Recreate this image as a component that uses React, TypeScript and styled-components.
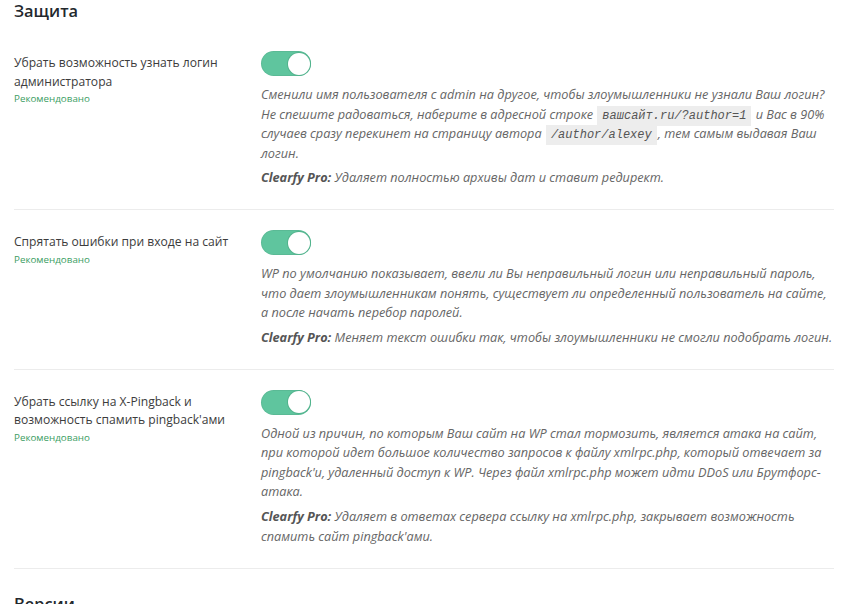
import styled, { createGlobalStyle } from 'styled-components'

const GlobalStyle = createGlobalStyle`
  body {
    margin: 0;
    background: #fff;
    font-family: "Open Sans", "Noto Sans", sans-serif;
    color: #444;
  }
`

const Page = styled.div`
  padding: 0 14px;
  width: 848px;
  box-sizing: border-box;
  height: 604px;
  overflow: hidden;
`

const SectionTitle = styled.h2`
  margin: 0;
  font-size: 16.4px;
  line-height: 22px;
  font-weight: 600;
  color: #23282d;
`

const Row = styled.div<{ $first?: boolean }>`
  display: grid;
  grid-template-columns: 247px 1fr;
  padding: ${p => (p.$first ? '29px' : '20px')} 0 22px;
  border-bottom: 1px solid #ececec;
`

const LabelCell = styled.div`
  padding-top: 3px;
`

const Label = styled.div`
  font-size: 12.1px;
  line-height: 18.5px;
  color: #3c3c3c;
`

const Recommended = styled.div`
  font-size: 9.8px;
  line-height: 13px;
  color: #3a9d62;
  margin-top: 1px;
`

const Content = styled.div``

const Toggle = styled.div<{ $on?: boolean }>`
  width: 50px;
  height: 25px;
  border-radius: 13px;
  background: ${p => (p.$on ? '#5fc59e' : '#ccc')};
  box-shadow: inset 0 0 0 1px rgba(0, 0, 0, 0.05);
  position: relative;
  margin-bottom: 9px;

  &::after {
    content: '';
    position: absolute;
    top: 1.5px;
    right: ${p => (p.$on ? '1.5px' : 'auto')};
    left: ${p => (p.$on ? 'auto' : '1.5px')};
    width: 22px;
    height: 22px;
    border-radius: 50%;
    background: #fff;
    box-shadow: 0 0 0 1px #52b38d;
  }
`

const Description = styled.p`
  margin: 0;
  font-size: 12.7px;
  line-height: 19.5px;
  font-style: italic;
  color: #666;
`

const ProNote = styled.p`
  margin: 4px 0 0;
  font-size: 12.7px;
  line-height: 20px;
  font-style: italic;
  color: #666;

  b {
    font-weight: 700;
    color: #555;
  }
`

const Code = styled.code`
  font-family: "Liberation Mono", monospace;
  font-size: 12px;
  line-height: 1;
  font-style: italic;
  background: #ededed;
  padding: 3px 5px;
  margin: 0 1px;
  color: #555;
`

const NextTitle = styled(SectionTitle)`
  margin-top: 24px;
`

interface Setting {
  label: string
  description: React.ReactNode
  pro: string
}

const settings: Setting[] = [
  {
    label: 'Убрать возможность узнать логин администратора',
    description: (
      <>
        Сменили имя пользователя с admin на другое, чтобы злоумышленники не узнали Ваш логин?
        Не спешите радоваться, наберите в адресной строке <Code>вашсайт.ru/?author=1</Code> и
        Вас в 90% случаев сразу перекинет на страницу автора <Code>/author/alexey</Code>, тем
        самым выдавая Ваш логин.
      </>
    ),
    pro: 'Удаляет полностью архивы дат и ставит редирект.',
  },
  {
    label: 'Спрятать ошибки при входе на сайт',
    description:
      'WP по умолчанию показывает, ввели ли Вы неправильный логин или неправильный пароль, что дает злоумышленникам понять, существует ли определенный пользователь на сайте, а после начать перебор паролей.',
    pro: 'Меняет текст ошибки так, чтобы злоумышленники не смогли подобрать логин.',
  },
  {
    label: "Убрать ссылку на X-Pingback и возможность спамить pingback'ами",
    description:
      "Одной из причин, по которым Ваш сайт на WP стал тормозить, является атака на сайт, при которой идет большое количество запросов к файлу xmlrpc.php, который отвечает за pingback'и, удаленный доступ к WP. Через файл xmlrpc.php может идти DDoS или Брутфорс-атака.",
    pro: "Удаляет в ответах сервера ссылку на xmlrpc.php, закрывает возможность спамить сайт pingback'ами.",
  },
]

export default function App() {
  return (
    <>
      <GlobalStyle />
      <Page>
        <SectionTitle>Защита</SectionTitle>
        {settings.map((s, i) => (
          <Row key={i} $first={i === 0}>
            <LabelCell>
              <Label>{s.label}</Label>
              <Recommended>Рекомендовано</Recommended>
            </LabelCell>
            <Content>
              <Toggle $on />
              <Description>{s.description}</Description>
              <ProNote>
                <b>Clearfy Pro:</b> {s.pro}
              </ProNote>
            </Content>
          </Row>
        ))}
        <NextTitle>Версии</NextTitle>
      </Page>
    </>
  )
}
